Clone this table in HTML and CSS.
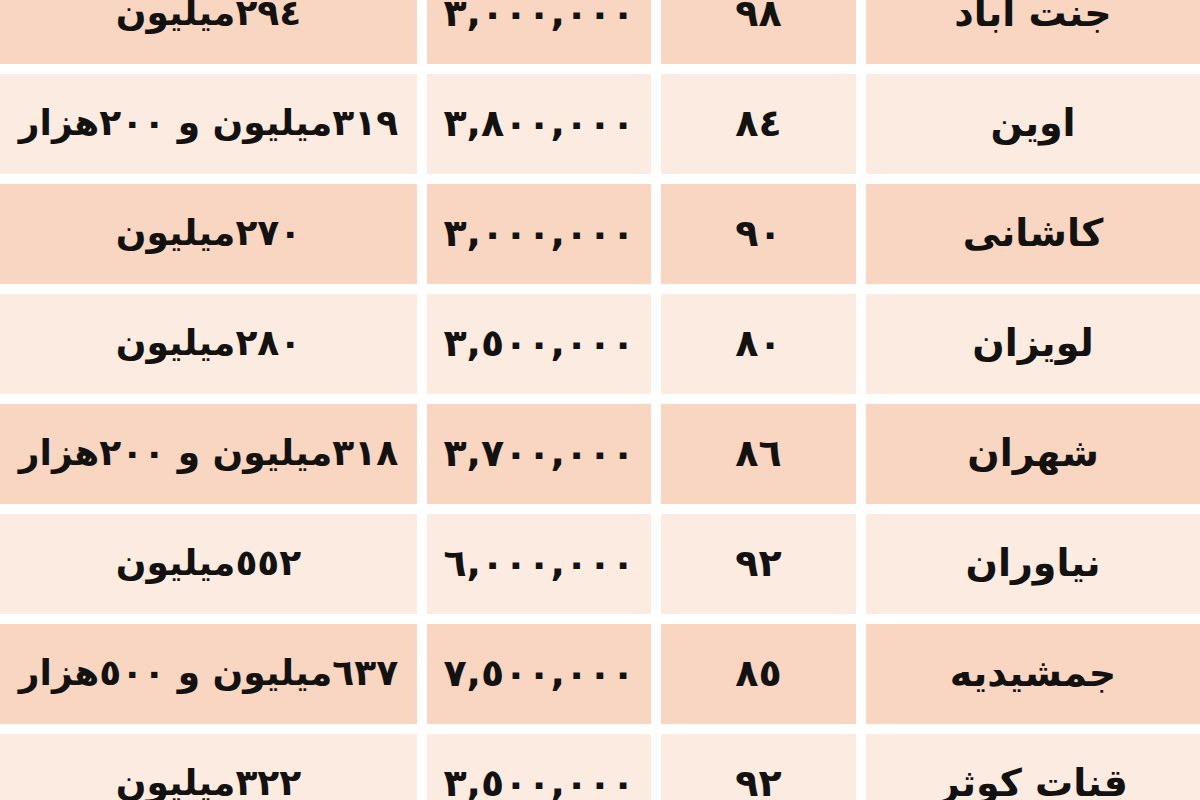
FILE: index.html
```html
<!DOCTYPE html>
<html lang="fa" dir="rtl">
<head>
<meta charset="utf-8">
<link rel="stylesheet" href="styles.css">
</head>
<body>
<div class="table">
  <div class="row dark"><div class="cell name">جنت آباد</div><div class="cell area">٩٨</div><div class="cell price">٣,٠٠٠,٠٠٠</div><div class="cell total">٢٩٤میلیون</div></div>
  <div class="row light"><div class="cell name">اوین</div><div class="cell area">٨٤</div><div class="cell price">٣,٨٠٠,٠٠٠</div><div class="cell total">٣١٩میلیون و ٢٠٠هزار</div></div>
  <div class="row dark"><div class="cell name">کاشانی</div><div class="cell area">٩٠</div><div class="cell price">٣,٠٠٠,٠٠٠</div><div class="cell total">٢٧٠میلیون</div></div>
  <div class="row light"><div class="cell name">لویزان</div><div class="cell area">٨٠</div><div class="cell price">٣,٥٠٠,٠٠٠</div><div class="cell total">٢٨٠میلیون</div></div>
  <div class="row dark"><div class="cell name">شهران</div><div class="cell area">٨٦</div><div class="cell price">٣,٧٠٠,٠٠٠</div><div class="cell total">٣١٨میلیون و ٢٠٠هزار</div></div>
  <div class="row light"><div class="cell name">نیاوران</div><div class="cell area">٩٢</div><div class="cell price">٦,٠٠٠,٠٠٠</div><div class="cell total">٥٥٢میلیون</div></div>
  <div class="row dark"><div class="cell name">جمشیدیه</div><div class="cell area">٨٥</div><div class="cell price">٧,٥٠٠,٠٠٠</div><div class="cell total">٦٣٧میلیون و ٥٠٠هزار</div></div>
  <div class="row light"><div class="cell name">قنات کوثر</div><div class="cell area">٩٢</div><div class="cell price">٣,٥٠٠,٠٠٠</div><div class="cell total">٣٢٢میلیون</div></div>
</div>
</body>
</html>
```
FILE: styles.css
```css
html, body {
  margin: 0;
  padding: 0;
  background: #ffffff;
  overflow: hidden;
}
body {
  width: 1200px;
  height: 800px;
  font-family: "DejaVu Sans", sans-serif;
  font-weight: bold;
  color: #141210;
}
.table {
  display: flex;
  flex-direction: column;
  gap: 10px;
  margin-top: -36px;
}
.row {
  display: grid;
  grid-template-columns: 334px 195px 224px 417px;
  column-gap: 10px;
  height: 100px;
}
.cell {
  display: flex;
  align-items: center;
  justify-content: center;
  font-size: 38px;
  padding-bottom: 3px;
  box-sizing: border-box;
  white-space: nowrap;
}
.dark .cell { background: #f8d6c1; }
.light .cell { background: #fcebe1; }
.price { letter-spacing: 4.5px; }
.total { font-size: 36px; }
```
